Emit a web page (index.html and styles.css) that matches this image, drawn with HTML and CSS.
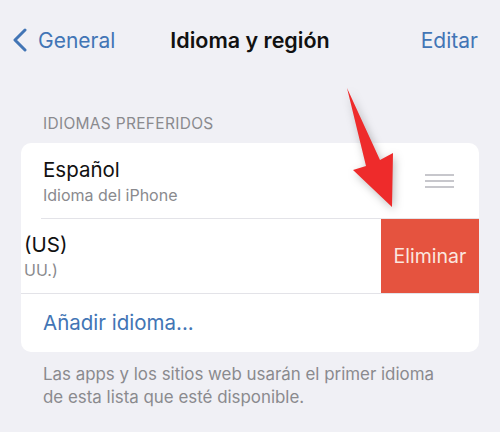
FILE: index.html
```html
<!DOCTYPE html>
<html>

<head>
    <title>Idioma y región</title>
    <link rel="stylesheet" href="styles.css">
</head>

<body>
    <!--Barra de navegacion-->
    <nav class="navbar">
        <a class="navbar-back" href="#">
            <svg class="chevron" width="16" height="24" viewBox="0 0 16 24">
                <path d="M13 2 L3 12 L13 22" fill="none" stroke="#4275b5" stroke-width="3" stroke-linecap="round" stroke-linejoin="round"/>
            </svg>
            <span>General</span>
        </a>
        <div class="navbar-title">Idioma y región</div>
        <a class="navbar-edit" href="#">Editar</a>
    </nav>

    <!--Idiomas preferidos-->
    <div class="section-header">IDIOMAS PREFERIDOS</div>
    <div class="list-card">
        <div class="list-row">
            <div class="row-text">
                <div class="row-title">Español</div>
                <div class="row-subtitle">Idioma del iPhone</div>
            </div>
            <div class="reorder">
                <span></span><span></span><span></span>
            </div>
        </div>
        <div class="list-row swiped">
            <div class="row-text">
                <div class="row-title">(US)</div>
                <div class="row-subtitle">UU.)</div>
            </div>
            <button class="delete-button">Eliminar</button>
        </div>
        <div class="list-row add-row">
            <a href="#" class="add-link">Añadir idioma...</a>
        </div>
    </div>
    <p class="section-footer">Las apps y los sitios web usarán el primer idioma<br>de esta lista que esté disponible.</p>

    <!--Flecha roja-->
    <svg class="arrow" width="60" height="130" viewBox="0 0 60 130">
        <path d="M2 2 L35 74 L48 67 L47 121 L8 84 L21 80 Z" fill="#ee2b2b"/>
    </svg>
</body>

</html>
```

FILE: styles.css
```css
  body {
      margin: 0;
      background-color: #f0f0f5;
      font-family: Inter, "Noto Sans", sans-serif;
      position: relative;
      height: 432px;
      overflow: hidden;
  }

  /* Style the navigation bar */
  .navbar {
      display: flex;
      justify-content: space-between;
      align-items: center;
      height: 80px;
      padding: 0 22px 0 12px;
  }

  .navbar-back {
      display: flex;
      align-items: center;
      gap: 10px;
      color: #4275b5;
      text-decoration: none;
      font-size: 21px;
      width: 140px;
  }

  .navbar-title {
      font-size: 21.5px;
      font-weight: 600;
      color: #111;
  }

  .navbar-edit {
      color: #4275b5;
      text-decoration: none;
      font-size: 21px;
      width: 130px;
      text-align: right;
  }

  /* Section */
  .section-header {
      font-size: 15.5px;
      letter-spacing: 0.3px;
      color: #8a8a8e;
      padding: 34px 0 0 43px;
      height: 29px;
  }

  .list-card {
      margin: 0 21px;
      background-color: #fff;
      border-radius: 10px;
      overflow: hidden;
  }

  .list-row {
      display: flex;
      align-items: center;
      height: 75px;
      padding-left: 22px;
      position: relative;
  }

  .list-row + .list-row::before {
      content: "";
      position: absolute;
      top: 0;
      left: 20px;
      right: 0;
      border-top: 1px solid #e3e3e8;
  }

  .row-text {
      flex: 1;
  }

  .row-title {
      font-size: 20.5px;
      color: #111;
      margin-bottom: 3px;
  }

  .row-subtitle {
      font-size: 16px;
      color: #8a8a8e;
  }

  .reorder {
      display: flex;
      flex-direction: column;
      gap: 4px;
      margin-right: 25px;
  }

  .reorder span {
      display: block;
      width: 29px;
      height: 2px;
      background-color: #c7c7cc;
  }

  .swiped {
      padding-left: 3px;
  }

  .delete-button {
      align-self: stretch;
      margin-top: 1px;
      width: 98px;
      border: none;
      background-color: #e5533f;
      color: #fbe6df;
      font-family: Inter, "Noto Sans", sans-serif;
      font-size: 19.5px;
      padding: 0;
  }

  .add-row {
      height: 59px;
  }

  .add-row::before {
      left: 0 !important;
  }

  .add-link {
      color: #4275b5;
      text-decoration: none;
      font-size: 20.5px;
  }

  .section-footer {
      margin: 11px 20px 0 43px;
      font-size: 16.9px;
      line-height: 23px;
      color: #8a8a8e;
  }

  .arrow {
      position: absolute;
      left: 345px;
      top: 86px;
      filter: drop-shadow(2px 3px 4px rgba(0, 0, 0, 0.25));
  }
```
